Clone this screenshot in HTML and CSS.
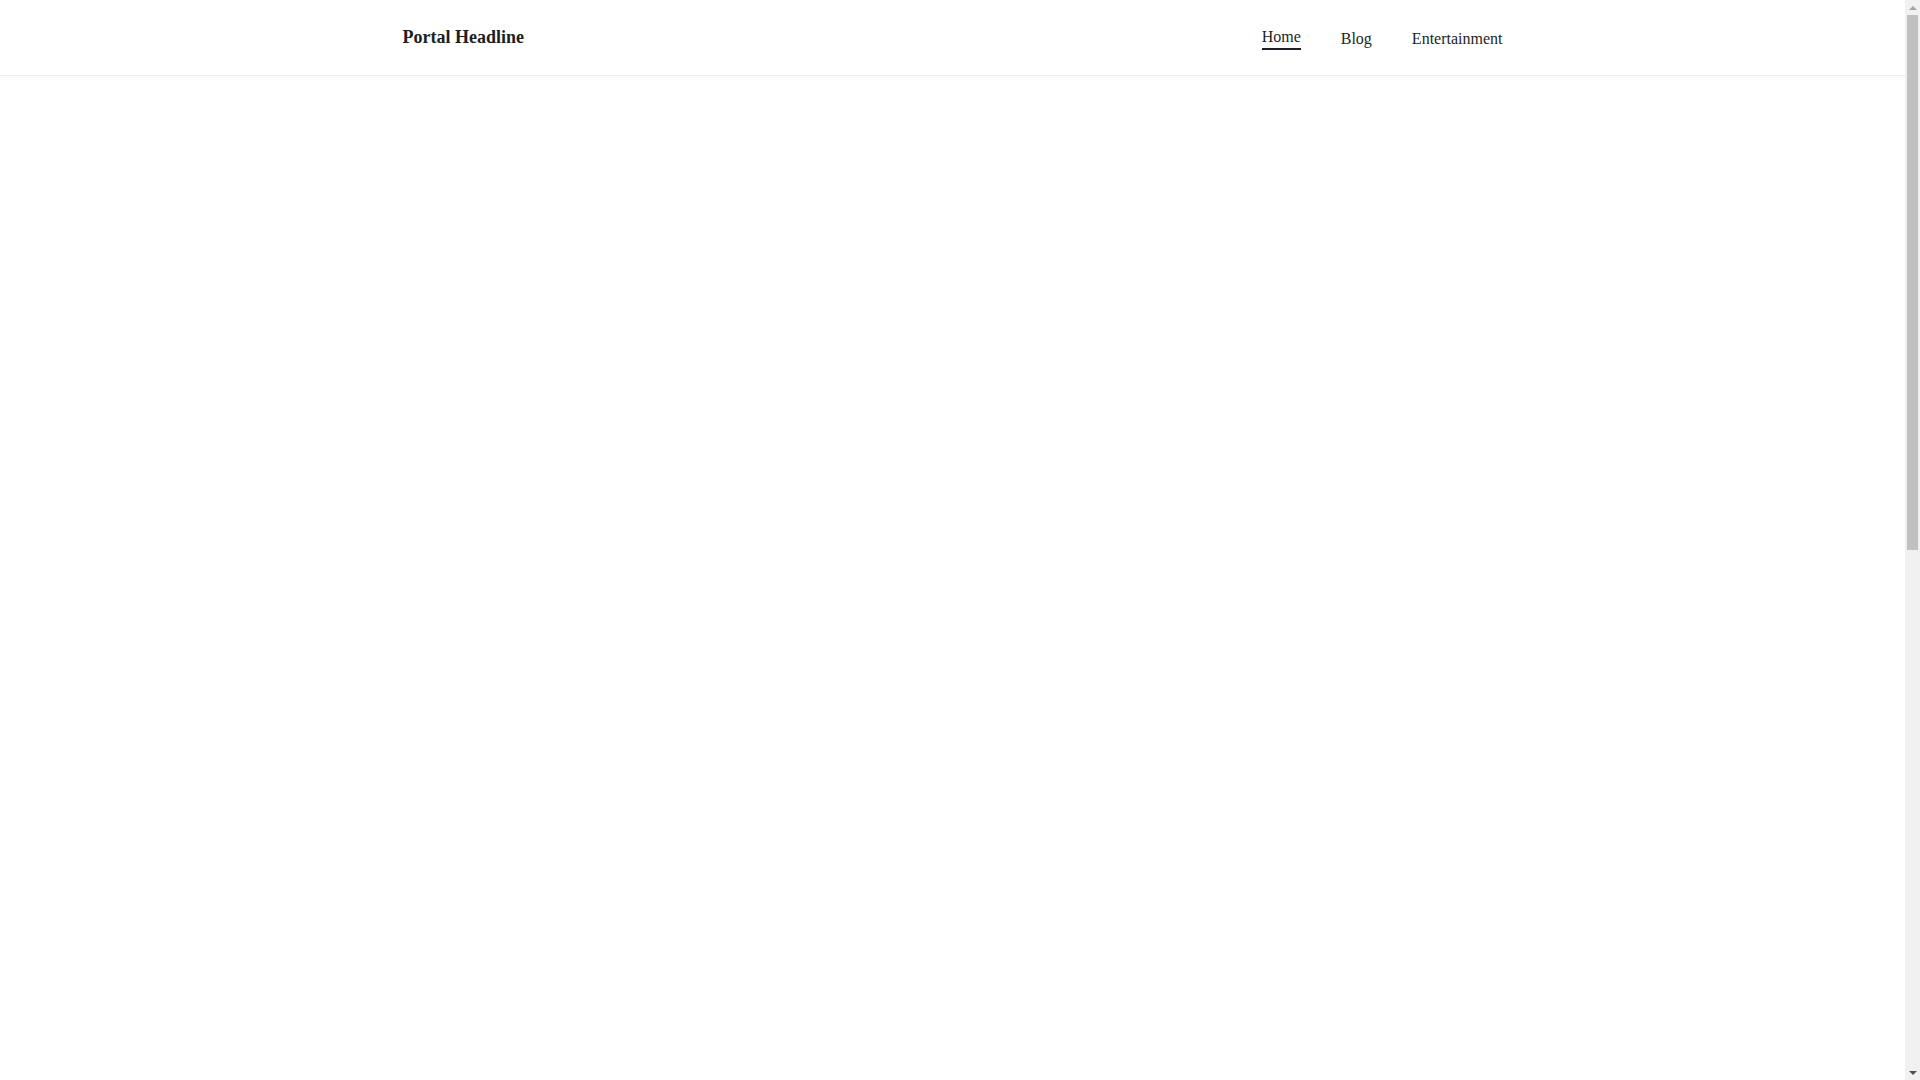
FILE: index.html
```html
<!DOCTYPE html>
<html lang="en">
<head>
<meta charset="utf-8">
<title>Portal Headline</title>
<link rel="stylesheet" href="styles.css">
</head>
<body>
<div class="page">
  <header class="site-header">
    <div class="container header-inner">
      <a class="logo" href="#">Portal Headline</a>
      <nav class="nav">
        <a class="nav-link active" href="#">Home</a>
        <a class="nav-link" href="#">Blog</a>
        <a class="nav-link" href="#">Entertainment</a>
      </nav>
    </div>
  </header>
  <main class="main"></main>
</div>
<div class="scrollbar" aria-hidden="true">
  <div class="sb-arrow sb-up"></div>
  <div class="sb-track">
    <div class="sb-thumb"></div>
  </div>
  <div class="sb-arrow sb-down"></div>
</div>
</body>
</html>
```
FILE: styles.css
```css
html, body {
  margin: 0;
  padding: 0;
  background: #ffffff;
}
body {
  font-family: "Liberation Serif", "Times New Roman", serif;
  color: #1b1f24;
}
.page {
  margin-right: 15px;
}
.site-header {
  height: 75px;
  border-bottom: 1px solid #ededed;
  box-shadow: 0 1px 2px rgba(0, 0, 0, 0.03);
  background: #ffffff;
}
.container {
  max-width: 1100px;
  margin: 0 auto;
  padding: 0 20px;
}
.header-inner {
  height: 100%;
  display: flex;
  align-items: center;
  justify-content: space-between;
}
.logo {
  font-size: 18px;
  font-weight: bold;
  color: #1b1f24;
  text-decoration: none;
  line-height: 1.15;
}
.nav {
  display: flex;
  align-items: center;
  gap: 40px;
  padding-top: 2px;
}
.nav-link {
  font-size: 16px;
  color: #1b1f24;
  text-decoration: none;
  line-height: 20px;
}
.nav-link.active {
  padding-bottom: 1px;
  border-bottom: 2px solid #1b1f24;
}
.main {
  height: 2045px;
}

/* simulated browser scrollbar */
.scrollbar {
  position: fixed;
  top: 0;
  right: 0;
  width: 15px;
  height: 100vh;
  background: #f1f1f1;
  display: flex;
  flex-direction: column;
}
.sb-arrow {
  height: 15px;
  display: flex;
  align-items: center;
  justify-content: center;
}
.sb-up::before {
  content: "";
  border-left: 4px solid transparent;
  border-right: 4px solid transparent;
  border-bottom: 4px solid #a3a3a3;
}
.sb-down::before {
  content: "";
  border-left: 4px solid transparent;
  border-right: 4px solid transparent;
  border-top: 4px solid #505050;
}
.sb-track {
  flex: 1;
  padding: 0 2px;
}
.sb-thumb {
  height: 535px;
  background: #c1c1c1;
}
```
